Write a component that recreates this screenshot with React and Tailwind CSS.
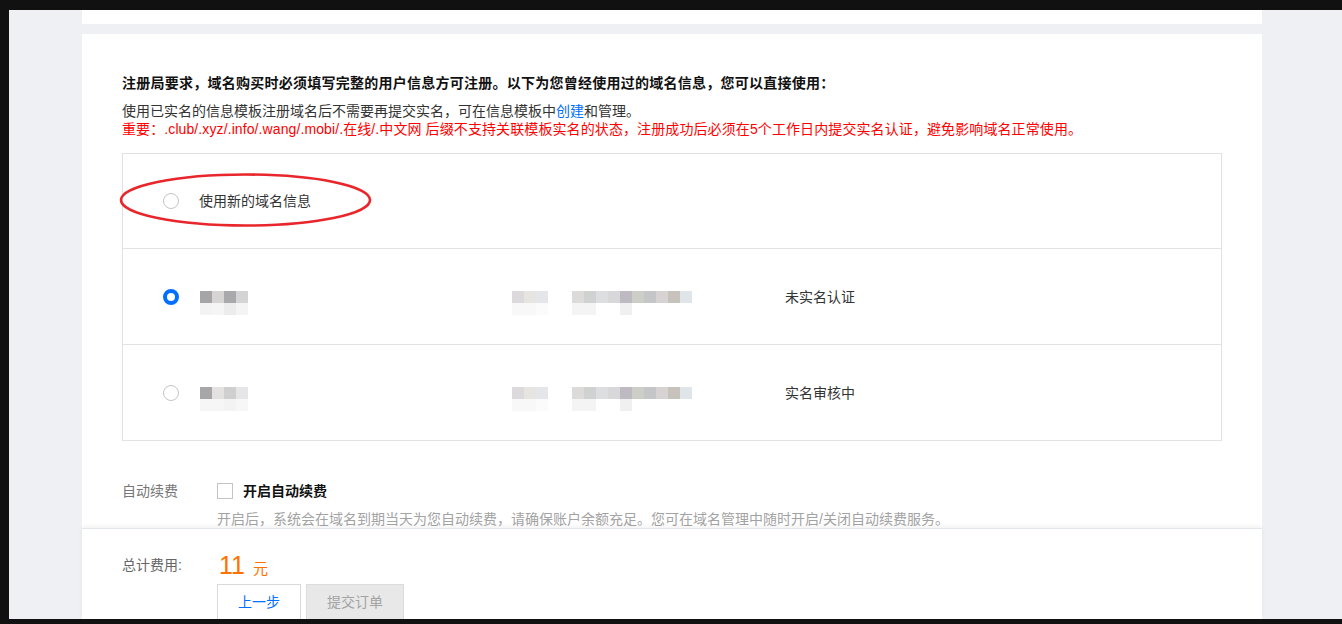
import React from "react";

const rowA2 = [
  ["bg-[#a5a5a8]", "bg-[#d6d5d3]", "bg-[#a9a9ab]", "bg-[#d4d4d4]"],
  ["bg-[#f3f3f3]", "bg-[#f5f5f5]", "bg-[#ececec]", "bg-[#f4f4f4]"],
];
const rowA3 = [
  ["bg-[#a7a6a9]", "bg-[#e3e2e0]", "bg-[#cfcfcf]", "bg-[#e6e6e8]"],
  ["bg-[#f6f6f6]", "bg-[#f6f6f6]", "bg-[#f3f3f3]", "bg-[#f7f7f7]"],
];
const mosaicB = [
  ["bg-[#dcdadc]", "bg-[#e6e5e1]", "bg-[#e5e6ea]"],
  ["bg-[#f8f8f8]", "bg-[#f8f8f8]", "bg-[#fbfbfb]"],
];
const mosaicC = [
  ["bg-[#dcdbd9]", "bg-[#d0d2d1]", "bg-[#dcdee0]", "bg-[#d8d8da]", "bg-[#bfb9c1]", "bg-[#cdcec8]", "bg-[#c5c6c8]", "bg-[#d6d3d2]", "bg-[#c8c2bd]", "bg-[#e0e5e9]"],
  ["bg-[#f4f4f4]", "bg-[#f4f4f4]", "bg-white", "bg-white", "bg-[#f0f0f0]", "bg-white", "bg-white", "bg-white", "bg-white", "bg-white"],
];

// pixelated blur blocks that hide the personal data
function Mosaic({ cells }) {
  return (
    <div className="flex flex-col mt-[12px]">
      {cells.map((line, i) => (
        <div key={i} className="flex">
          {line.map((c, j) => (
            <div key={j} className={`w-[12px] h-[12px] ${c}`} />
          ))}
        </div>
      ))}
    </div>
  );
}

function Radio({ checked }) {
  return checked ? (
    <span className="block w-[16px] h-[16px] rounded-full border-[4px] border-[#006eff] bg-white shrink-0" />
  ) : (
    <span className="block w-[16px] h-[16px] rounded-full border border-[#c4c4c4] bg-white shrink-0" />
  );
}

function InfoRow({ checked, mosaic, status }) {
  return (
    <div className="h-[96px] flex items-center pl-[40px] border-t border-[#e2e2e2]">
      <Radio checked={checked} />
      <div className="w-[333px] pl-[21px] flex items-center">
        <Mosaic cells={mosaic} />
      </div>
      <div className="w-[60px] flex items-center">
        <Mosaic cells={mosaicB} />
      </div>
      <div className="w-[213px] flex items-center">
        <Mosaic cells={mosaicC} />
      </div>
      <div className="text-[14px] leading-[20px] text-[#333]">{status}</div>
    </div>
  );
}

export default function App() {
  return (
    <div className="h-[624px] w-[1342px] overflow-hidden bg-[#111] pt-[10px] pl-[9px] pb-[5px] flex flex-col font-['Liberation_Sans','Noto_Sans_CJK_SC',sans-serif]">
      <div className="flex-1 min-h-0 bg-[#eff0f4] flex flex-col">
        <div className="ml-[73px] w-[1180px] h-full flex flex-col">
          <div className="h-[14px] bg-white shrink-0" />

          <div className="mt-[10px] flex-1 min-h-0 bg-white overflow-hidden px-[40px] pt-[39px]">
            <p className="text-[14px] leading-[20px] font-bold text-[#111] tracking-[0.25px]">
              注册局要求，域名购买时必须填写完整的用户信息方可注册。以下为您曾经使用过的域名信息，您可以直接使用：
            </p>
            <p className="mt-[9px] text-[14px] leading-[18px] text-[#333]">
              使用已实名的信息模板注册域名后不需要再提交实名，可在信息模板中<span className="text-[#006eff]">创建</span>和管理。
            </p>
            <p className="text-[14px] leading-[18px] text-[#ff0000] tracking-[0.1px]">
              重要：.club/.xyz/.info/.wang/.mobi/.在线/.中文网 后缀不支持关联模板实名的状态，注册成功后必须在5个工作日内提交实名认证，避免影响域名正常使用。
            </p>

            <div className="relative mt-[15px] border-x border-b border-[#e2e2e2]">
              <div className="h-[95px] flex items-center pl-[40px] border-t border-[#e2e2e2]">
                <Radio />
                <span className="ml-[20px] text-[14px] leading-[20px] text-[#333]">使用新的域名信息</span>
              </div>
              <InfoRow checked mosaic={rowA2} status="未实名认证" />
              <InfoRow mosaic={rowA3} status="实名审核中" />

              <svg className="absolute left-[-4px] top-[19px]" width="254" height="56" viewBox="0 0 254 56">
                <ellipse cx="126.5" cy="28" rx="124.5" ry="25.5" fill="none" stroke="#e8262b" strokeWidth="2.6" />
              </svg>
            </div>

            <div className="mt-[40px] flex items-center">
              <div className="w-[95px] text-[14px] leading-[20px] text-[#777]">自动续费</div>
              <span className="block w-[16px] h-[16px] border border-[#c4c4c4] bg-white" />
              <span className="ml-[10px] text-[14px] leading-[20px] font-bold text-[#111]">开启自动续费</span>
            </div>
            <p className="mt-[9px] pl-[95px] text-[14px] leading-[18px] text-[#a3a3a3]">
              开启后，系统会在域名到期当天为您自动续费，请确保账户余额充足。您可在域名管理中随时开启/关闭自动续费服务。
            </p>
          </div>

          <div className="h-[91px] shrink-0 bg-white overflow-hidden border-t border-[#e3e6ea] shadow-[0_-2px_4px_rgba(0,0,0,0.05)] px-[40px] pt-[20px]">
            <div className="h-[32px] flex items-center">
              <div className="w-[95px] text-[14px] leading-[20px] text-[#666]">总计费用:</div>
              <div className="flex items-baseline text-[#ff7200]">
                <span className="ml-[2px] text-[25px] leading-[32px]">11</span>
                <span className="ml-[8px] text-[15px]">元</span>
              </div>
            </div>
            <div className="mt-[3px] ml-[95px] flex gap-[5px]">
              <button className="w-[84px] h-[36px] border border-[#d9d9d9] bg-white text-[14px] text-[#006eff]">上一步</button>
              <button className="w-[98px] h-[36px] border border-[#dcdcdc] bg-[#e8e8e8] text-[14px] text-[#a3a3a3]">提交订单</button>
            </div>
          </div>
        </div>
      </div>
    </div>
  );
}
